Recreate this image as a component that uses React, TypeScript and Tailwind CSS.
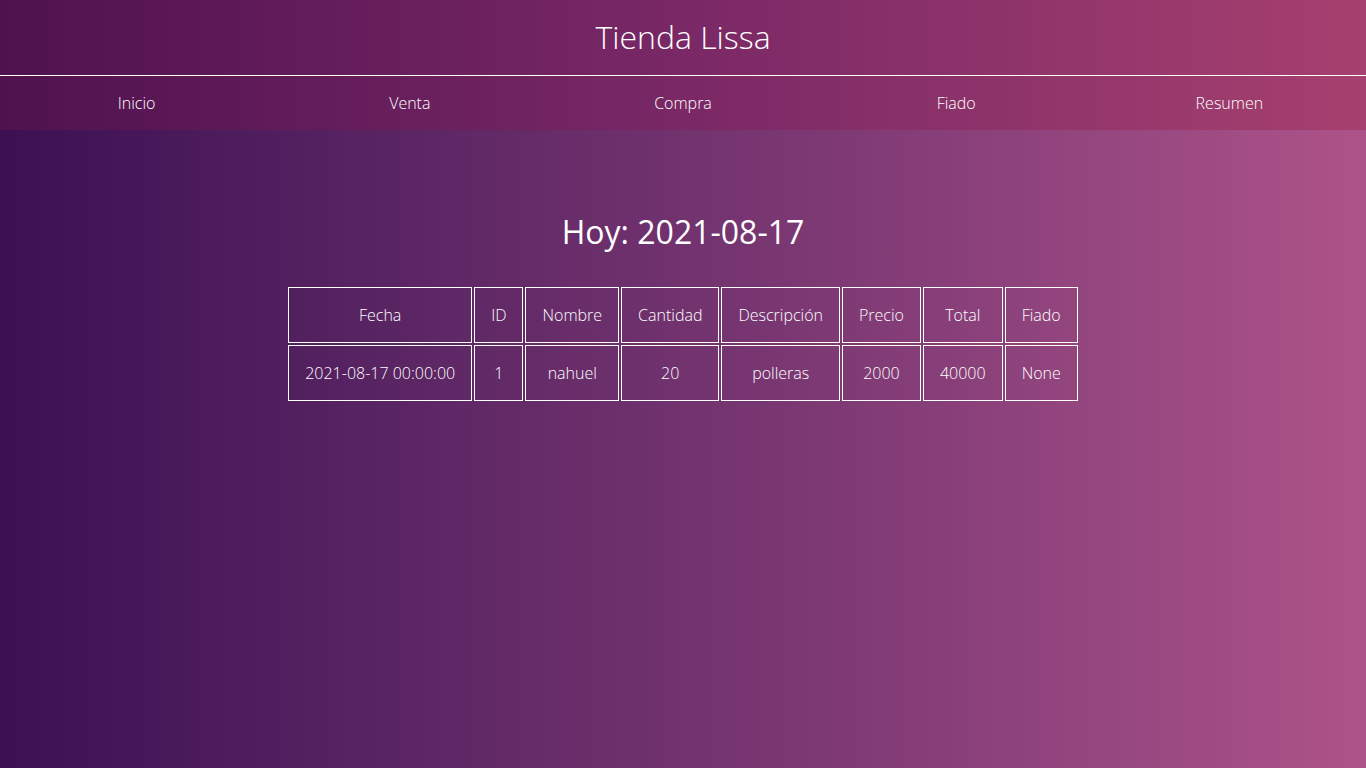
import React from "react";

const nav = ["Inicio", "Venta", "Compra", "Fiado", "Resumen"];
const headers = ["Fecha", "ID", "Nombre", "Cantidad", "Descripción", "Precio", "Total", "Fiado"];
const row = ["2021-08-17 00:00:00", "1", "nahuel", "20", "polleras", "2000", "40000", "None"];

export default function App() {
  return (
    <div
      className="min-h-[768px] w-full bg-gradient-to-r from-[#3c1053] to-[#ad5389] text-white"
      style={{ fontFamily: '"Open Sans", "Noto Sans", sans-serif' }}
    >
      <header className="bg-gradient-to-r from-[#4f124f] via-[#7a2866] to-[#a6406f]">
        <div className="flex h-[76px] items-center justify-center border-b border-white pb-[2px]">
          <h1 className="text-[32px] font-light leading-[48px]">Tienda Lissa</h1>
        </div>
        <nav className="grid h-[54px] grid-cols-5 items-center">
          {nav.map((n) => (
            <a key={n} className="text-center text-base font-light leading-6">
              {n}
            </a>
          ))}
        </nav>
      </header>
      <main className="flex flex-col items-center pt-[78px]">
        <h2 className="mb-[29px] text-[32px] font-normal leading-[48px]">Hoy: 2021-08-17</h2>
        <table className="border-separate border-spacing-[2px] text-base font-light">
          <thead>
            <tr>
              {headers.map((h) => (
                <th key={h} className="h-[56px] border border-white px-4 text-center font-light leading-6">
                  {h}
                </th>
              ))}
            </tr>
          </thead>
          <tbody>
            <tr>
              {row.map((c, i) => (
                <td key={i} className="h-[56px] border border-white px-4 text-center leading-6">
                  {c}
                </td>
              ))}
            </tr>
          </tbody>
        </table>
      </main>
    </div>
  );
}
